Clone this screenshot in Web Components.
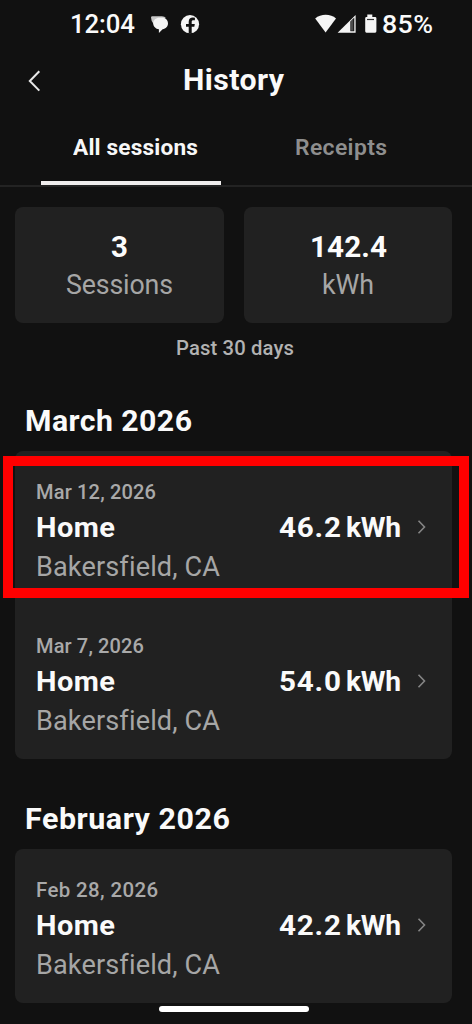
<!DOCTYPE html>
<html lang="en">
<head>
<meta charset="utf-8">
<title>History</title>
<style>
html,body{margin:0;background:#111;height:1024px;overflow:hidden}
body{font-family:Roboto,"Open Sans",sans-serif;color:#fafafa}
</style>
</head>
<body>
<history-app></history-app>
<script>
const define = (name, html, after) => customElements.define(name, class extends HTMLElement {
  connectedCallback() {
    if (this.shadowRoot) return;
    this.attachShadow({mode: 'open'}).innerHTML = html(this);
    if (after) after(this);
  }
});

/* Text run fitted to a measure, half by tracking and half by width: w = width, s = size, h = line height, k = weight */
define('track-text', el => {
  const a = n => el.getAttribute(n);
  return `<style>
    :host{display:block;width:${a('w')}px;height:${a('h')}px;line-height:${a('h')}px;font-size:${a('s')}px;font-weight:${a('k') || 400};white-space:nowrap;flex:none}
    span{display:inline-block;transform-origin:0 50%}
  </style><span>${a('t')}</span>`;
}, el => {
  const span = el.shadowRoot.querySelector('span');
  const n = el.getAttribute('t').length, w = +el.getAttribute('w');
  const natural = span.getBoundingClientRect().width;
  if (n < 2) return;
  const gap = (w - natural) / 2 / (n - 1);
  span.style.letterSpacing = gap + 'px';
  span.style.transform = `scaleX(${w / (natural + gap * (n - 1))})`;
});

define('status-bar', () => `<style>
  :host{display:flex;height:48px;box-sizing:border-box;padding:0 39px 0 70px;align-items:center;justify-content:space-between}
  div{display:flex;align-items:center}
  svg{display:block}
  </style>
  <div><track-text t="12:04" w="65" s="26" h="48" k="500"></track-text>
    <svg width="72" height="48" viewBox="135 0 72 48" fill="#f5f5f5">
      <path d="M151 17.500q0-1.300 1.400-1.300h9.500q2.800 0 4 1.800l-8 6h-4.200q-2.700-2.600-2.700-6.500z" fill="#c8c8c8"/>
      <path d="M153.200 23.300c0-3.200 2.700-5.600 6.200-5.600h2.700c3.500 0 5.900 2.400 5.900 5.600 0 3.200-2.200 5.600-5.400 6l-3.700 3.700v-3.700c-3.200-.3-5.700-2.800-5.700-6z"/>
      <circle cx="190" cy="24.200" r="9.100"/>
      <path d="M188.700 33.500v-6.700h-2.700v-2.900h2.700v-2.200c0-2.800 1.700-4.200 4.200-4.200l2 .15v2.500h-1.400c-1.400 0-1.800.7-1.800 1.700v2.050h3.100l-.5 2.900h-2.600v6.700z" fill="#111"/>
    </svg></div>
  <div><svg width="67" height="48" viewBox="315 0 67 48" fill="#f5f5f5">
      <path d="M315.200 18.500c5.500-5 15.500-5 20.800 0L325.600 32.600z"/>
      <path d="M355.600 15v17.700h-18z"/>
      <path d="M350.300 21.500l4-4v13.700h-4z" fill="#222"/>
      <path d="M352 20v10.500" stroke="#777" stroke-width="1"/>
      <path d="M366.500 14.500h5V17h2.800q1.300 0 1.300 1.300v13q0 1.400-1.300 1.400h-8.600q-1.300 0-1.300-1.400v-13q0-1.300 1.300-1.300h.8z" transform="translate(.8)"/>
      <path d="M367 19.500h7" stroke="#333" stroke-width="1.200"/>
    </svg><track-text t="85%" w="51" s="26.500" h="48" k="500"></track-text></div>`);

define('page-title', () => `<style>
  :host{display:grid;grid-template-columns:183px 1fr;height:66px;align-items:start}
  svg{display:block}
  </style>
  <svg width="60" height="66" viewBox="0 48 60 66" fill="none" stroke="#e8e8e8" stroke-width="2"><path d="M39.300 71.200L29.800 81l9.500 9.600"/></svg>
  <track-text t="History" w="101" s="29.500" h="64" k="700"></track-text>`);

define('tab-item', el => `<style>
  :host{display:flex;box-sizing:border-box;width:180px;height:71px;justify-content:center;color:#8e8e8e;border-bottom:4px solid transparent}
  :host([active]){color:#f7f7f7;border-color:#f0eeee}
  :host([active]) track-text{padding-left:9px}
  </style><track-text t="${el.getAttribute('label')}" w="${el.getAttribute('w')}" s="22.300" h="66" k="${el.hasAttribute('active') ? 700 : 600}"></track-text>`);

define('tab-strip', () => `<style>
  :host{display:flex;height:73px;box-sizing:border-box;padding-left:41px;gap:30px;border-bottom:2px solid #232323}
  </style><slot></slot>`);

define('stat-card', el => `<style>
  :host{display:flex;flex-direction:column;align-items:center;box-sizing:border-box;height:116px;padding-top:20px;border-radius:8px;background:#212121;color:#fcfcfc}
  .unit{color:#a6a6a6}
  </style>
  <track-text t="${el.getAttribute('value')}" w="${el.getAttribute('vw')}" s="29.500" h="40" k="700"></track-text>
  <track-text class="unit" t="${el.getAttribute('unit')}" w="${el.getAttribute('uw')}" s="27" h="36"></track-text>`);

define('stat-summary', () => `<style>
  :host{display:block;padding:20px 20px 0 15px}
  .cards{display:grid;grid-template-columns:209px 208px;gap:20px}
  .period{display:flex;justify-content:center;color:#b2b2b2;padding-left:2px}
  </style><div class="cards"><slot></slot></div>
  <div class="period"><track-text t="Past 30 days" w="118" s="20" h="50" k="500"></track-text></div>`);

define('month-group', el => `<style>
  :host{display:block;padding:0 20px 0 15px}
  .head{padding:${el.getAttribute('lead')}px 0 0 10px}
  .list{border-radius:8px;background:#212121}
  </style><div class="head"><track-text t="${el.getAttribute('label')}" w="${el.getAttribute('w')}" s="29.500" h="60" k="700"></track-text></div>
  <div class="list"><slot></slot></div>`);

define('session-row', el => `<style>
  :host{display:flex;box-sizing:border-box;height:154px;padding:25px 25px 0 21px;position:relative}
  .place{flex:1}
  .date{color:#a9a9a9;display:block}
  .city{color:#a6a6a6}
  .energy{display:flex;padding-top:31px;gap:5px}
  svg{display:block;margin:12px 0 0 11px}
  .mark{position:absolute;left:-12px;top:5px;width:446px;height:122px;border:10px solid #f00}
  </style>
  <div class="place">
    <track-text class="date" t="${el.getAttribute('date')}" w="${el.getAttribute('dw')}" s="19.800" h="33" k="500"></track-text>
    <track-text t="Home" w="79" s="28.500" h="38" k="700"></track-text>
    <track-text class="city" t="Bakersfield, CA" w="183" s="26.800" h="41"></track-text>
  </div>
  <div class="energy"><track-text t="${el.getAttribute('kwh')}" w="62" s="28.500" h="42" k="700"></track-text><track-text t="kWh" w="55" s="28.500" h="42" k="700"></track-text>
  <svg width="10" height="16" viewBox="0 0 10 16" fill="none" stroke="#858585" stroke-width="1.600"><path d="M1.500 1.800l6 6.200-6 6.200"/></svg></div>
  ${el.hasAttribute('marked') ? '<div class="mark"></div>' : ''}`);

define('history-app', () => `<style>
  :host{display:block;width:472px;height:1024px;background:#111;position:relative;overflow:hidden}
  .gesture{position:absolute;left:159px;top:1005.500px;width:150px;height:6.500px;border-radius:3px;background:#fff}
  </style>
  <status-bar></status-bar>
  <page-title></page-title>
  <tab-strip><tab-item active label="All sessions" w="125"></tab-item><tab-item label="Receipts" w="92"></tab-item></tab-strip>
  <stat-summary>
    <stat-card value="3" vw="17" unit="Sessions" uw="107"></stat-card>
    <stat-card value="142.4" vw="77" unit="kWh" uw="52"></stat-card>
  </stat-summary>
  <month-group label="March 2026" w="167" lead="18">
    <session-row marked date="Mar 12, 2026" dw="120" kwh="46.2"></session-row>
    <session-row date="Mar 7, 2026" dw="108" kwh="54.0"></session-row>
  </month-group>
  <month-group label="February 2026" w="205" lead="30">
    <session-row date="Feb 28, 2026" dw="122" kwh="42.2"></session-row>
  </month-group>
  <div class="gesture"></div>`);
</script>
</body>
</html>
